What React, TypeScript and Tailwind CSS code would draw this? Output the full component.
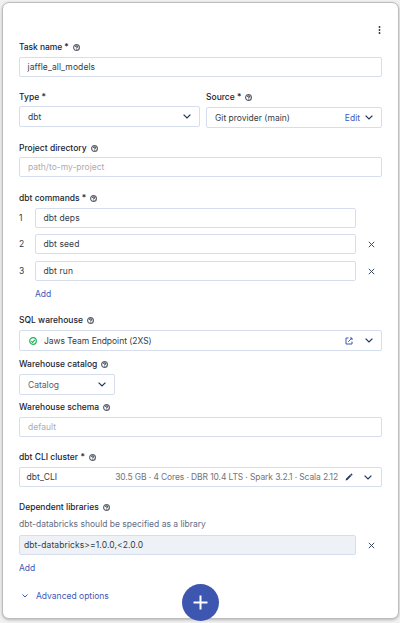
import type { ReactNode } from 'react';

function Help() {
  return (
    <svg className="ml-1 h-[7px] w-[7px] shrink-0" viewBox="0 0 14 14" fill="none" stroke="#5c636d" strokeWidth="2.4">
      <circle cx="7" cy="7" r="5.8" />
      <path d="M4.8 5.8C4.8 3.2 9.2 3.2 9.2 5.7C9.2 7 7 7 7 8.6M7 9.4V11.2" />
    </svg>
  );
}

function Label({ children, help = true, className = '' }: { children: ReactNode; help?: boolean; className?: string }) {
  return (
    <div className={`flex h-4 items-center whitespace-nowrap font-medium text-[#1a2531] ${className}`}>
      <span>{children}</span>
      {help && <Help />}
    </div>
  );
}

function Box({ children, className = '' }: { children: ReactNode; className?: string }) {
  return (
    <div className={`flex items-center whitespace-nowrap rounded-[2px] border border-[#d6deed] ${className}`}>
      {children}
    </div>
  );
}

function Chevron({ className = '' }: { className?: string }) {
  return (
    <svg className={`h-[5px] w-2 shrink-0 ${className}`} viewBox="0 0 8 5" fill="none" stroke="currentColor" strokeWidth="1.2">
      <path d="M0.6 0.6L4 4L7.4 0.6" />
    </svg>
  );
}

function Close() {
  return (
    <svg className="ml-3 h-[7px] w-[7px] shrink-0 text-[#3c4a68]" viewBox="0 0 7 7" fill="none" stroke="currentColor" strokeWidth="1">
      <path d="M0.8 0.8L6.2 6.2M6.2 0.8L0.8 6.2" />
    </svg>
  );
}

function Command({ index, text, removable, className = '' }: { index: number; text: string; removable?: boolean; className?: string }) {
  return (
    <div className={`flex h-5 items-center ${className}`}>
      <span className="w-4 shrink-0">{index}</span>
      <Box className="h-5 w-[321px] pl-[7.5px] tracking-[0.1px]">{text}</Box>
      {removable && <Close />}
    </div>
  );
}

export default function App() {
  return (
    <div className="relative h-[623px] w-[400px] overflow-hidden bg-[#f1f1f1] p-[2px] font-['Inter','Liberation_Sans',sans-serif] text-[8.5px] leading-4 text-[#353c45]">
      <div className="h-[617px] w-[397px] rounded-[7px] border border-[#bdbdbd] bg-white pl-4 pr-4 pt-[21px] shadow-[0_1px_3px_rgba(0,0,0,0.25)]">
        <div className="flex h-[15px] justify-end pr-[1px] pt-[2px]">
          <svg className="h-2 w-[3px]" viewBox="0 0 3 8" fill="#253047">
            <circle cx="1.5" cy="1" r="0.95" />
            <circle cx="1.5" cy="4" r="0.95" />
            <circle cx="1.5" cy="7" r="0.95" />
          </svg>
        </div>

        <Label className="tracking-[-0.08px]">Task name *</Label>
        <Box className="mt-[2px] h-5 w-[363px] pl-[7.5px] tracking-[0.1px]">jaffle_all_models</Box>

        <div className="mt-3 flex gap-[6px]">
          <div>
            <Label help={false}>Type *</Label>
            <Box className="mt-px h-[21px] w-[181px] justify-between pl-[8px] pr-[8px]">
              <span>dbt</span>
              <Chevron className="text-[#1d355a]" />
            </Box>
          </div>
          <div>
            <Label>Source *</Label>
            <Box className="mt-[2px] h-[21px] w-[176px] pl-[8px] pr-[8px]">
              <span>Git provider (main)</span>
              <span className="ml-auto text-[#3f57b8]">Edit</span>
              <Chevron className="ml-[5px] text-[#1d355a]" />
            </Box>
          </div>
        </div>

        <Label className="mt-3">Project directory</Label>
        <Box className="mt-px h-5 w-[363px] pl-[8px] text-[#adadad]">path/to-my-project</Box>

        <Label className="mt-[13px]">dbt commands *</Label>
        <Command className="mt-[2px]" index={1} text="dbt deps" />
        <Command className="mt-[6px]" index={2} text="dbt seed" removable />
        <Command className="mt-[7px]" index={3} text="dbt run" removable />
        <div className="mt-[5px] pl-4 text-[#3f57b8]">Add</div>

        <Label className="mt-[10px]">SQL warehouse</Label>
        <Box className="mt-[2px] h-[21px] w-[363px] pl-[9px] pr-[8px]">
          <svg className="h-2 w-2 shrink-0" viewBox="0 0 16 16" fill="none" stroke="#1fb25a" strokeWidth="2.4">
            <circle cx="8" cy="8" r="6.6" />
            <path d="M4.5 8.2L7.2 10.7L11.7 5.8" />
          </svg>
          <span className="ml-[7px] tracking-[-0.03px]">Jaws Team Endpoint (2XS)</span>
          <svg className="ml-auto h-2 w-2 shrink-0" viewBox="0 0 16 16" fill="none" stroke="#3f57b8" strokeWidth="2">
            <path d="M7 2H2V14H14V9M10 2H14V6M14 2L6.5 9.5" />
          </svg>
          <Chevron className="ml-3 text-[#1d355a]" />
        </Box>

        <Label className="mt-[5px]">Warehouse catalog</Label>
        <Box className="mt-[2px] h-[21px] w-24 justify-between pl-[8px] pr-[8px] text-[#526078]">
          <span>Catalog</span>
          <Chevron className="text-[#1d355a]" />
        </Box>

        <Label className="mt-1">Warehouse schema</Label>
        <Box className="mt-[2px] h-5 w-[363px] pl-[8px] text-[#adadad]">default</Box>

        <Label className="mt-3">dbt CLI cluster *</Label>
        <Box className="mt-[2px] h-5 w-[363px] pl-[6.5px] pr-[9px]">
          <span className="tracking-[0.1px]">dbt_CLI</span>
          <span className="ml-auto tracking-[-0.12px] text-[#747474]">30.5 GB · 4 Cores · DBR 10.4 LTS · Spark 3.2.1 · Scala 2.12</span>
          <svg className="ml-[7px] h-2 w-2 shrink-0" viewBox="0 0 8 8" fill="#26375c">
            <path d="M0.6 7.5L1 5.7L5 1.8L6.3 3.1L2.4 7.1ZM5.3 1.5L6.2 0.6C6.5 0.3 7.8 1.5 7.4 1.9L6.6 2.8Z" />
          </svg>
          <Chevron className="ml-[11px] text-[#1d355a]" />
        </Box>

        <Label className="mt-3">Dependent libraries</Label>
        <div className="mt-px whitespace-nowrap text-[#5f6d83]">dbt-databricks should be specified as a library</div>
        <div className="mt-[3px] flex h-5 items-center">
          <Box className="h-5 w-[337px] bg-[#eef2f6] pl-[4px] tracking-[0.09px]">dbt-databricks&gt;=1.0.0,&lt;2.0.0</Box>
          <Close />
        </div>
        <div className="mt-[5px] text-[#3f57b8]">Add</div>

        <div className="mt-3 flex items-center pl-[3px] text-[#3f57b8]">
          <svg className="h-1 w-[6px]" viewBox="0 0 6 4" fill="none" stroke="currentColor" strokeWidth="1">
            <path d="M0.5 0.5L3 3L5.5 0.5" />
          </svg>
          <span className="ml-2">Advanced options</span>
        </div>
      </div>
      <div className="absolute left-[182px] top-[584px] flex h-[37px] w-[37px] items-center justify-center rounded-full bg-[#3d56b0]">
        <svg className="h-[15px] w-[15px]" viewBox="0 0 15 15" stroke="white" strokeWidth="2">
          <path d="M7.5 0.5V14.5M0.5 7.5H14.5" />
        </svg>
      </div>
    </div>
  );
}
